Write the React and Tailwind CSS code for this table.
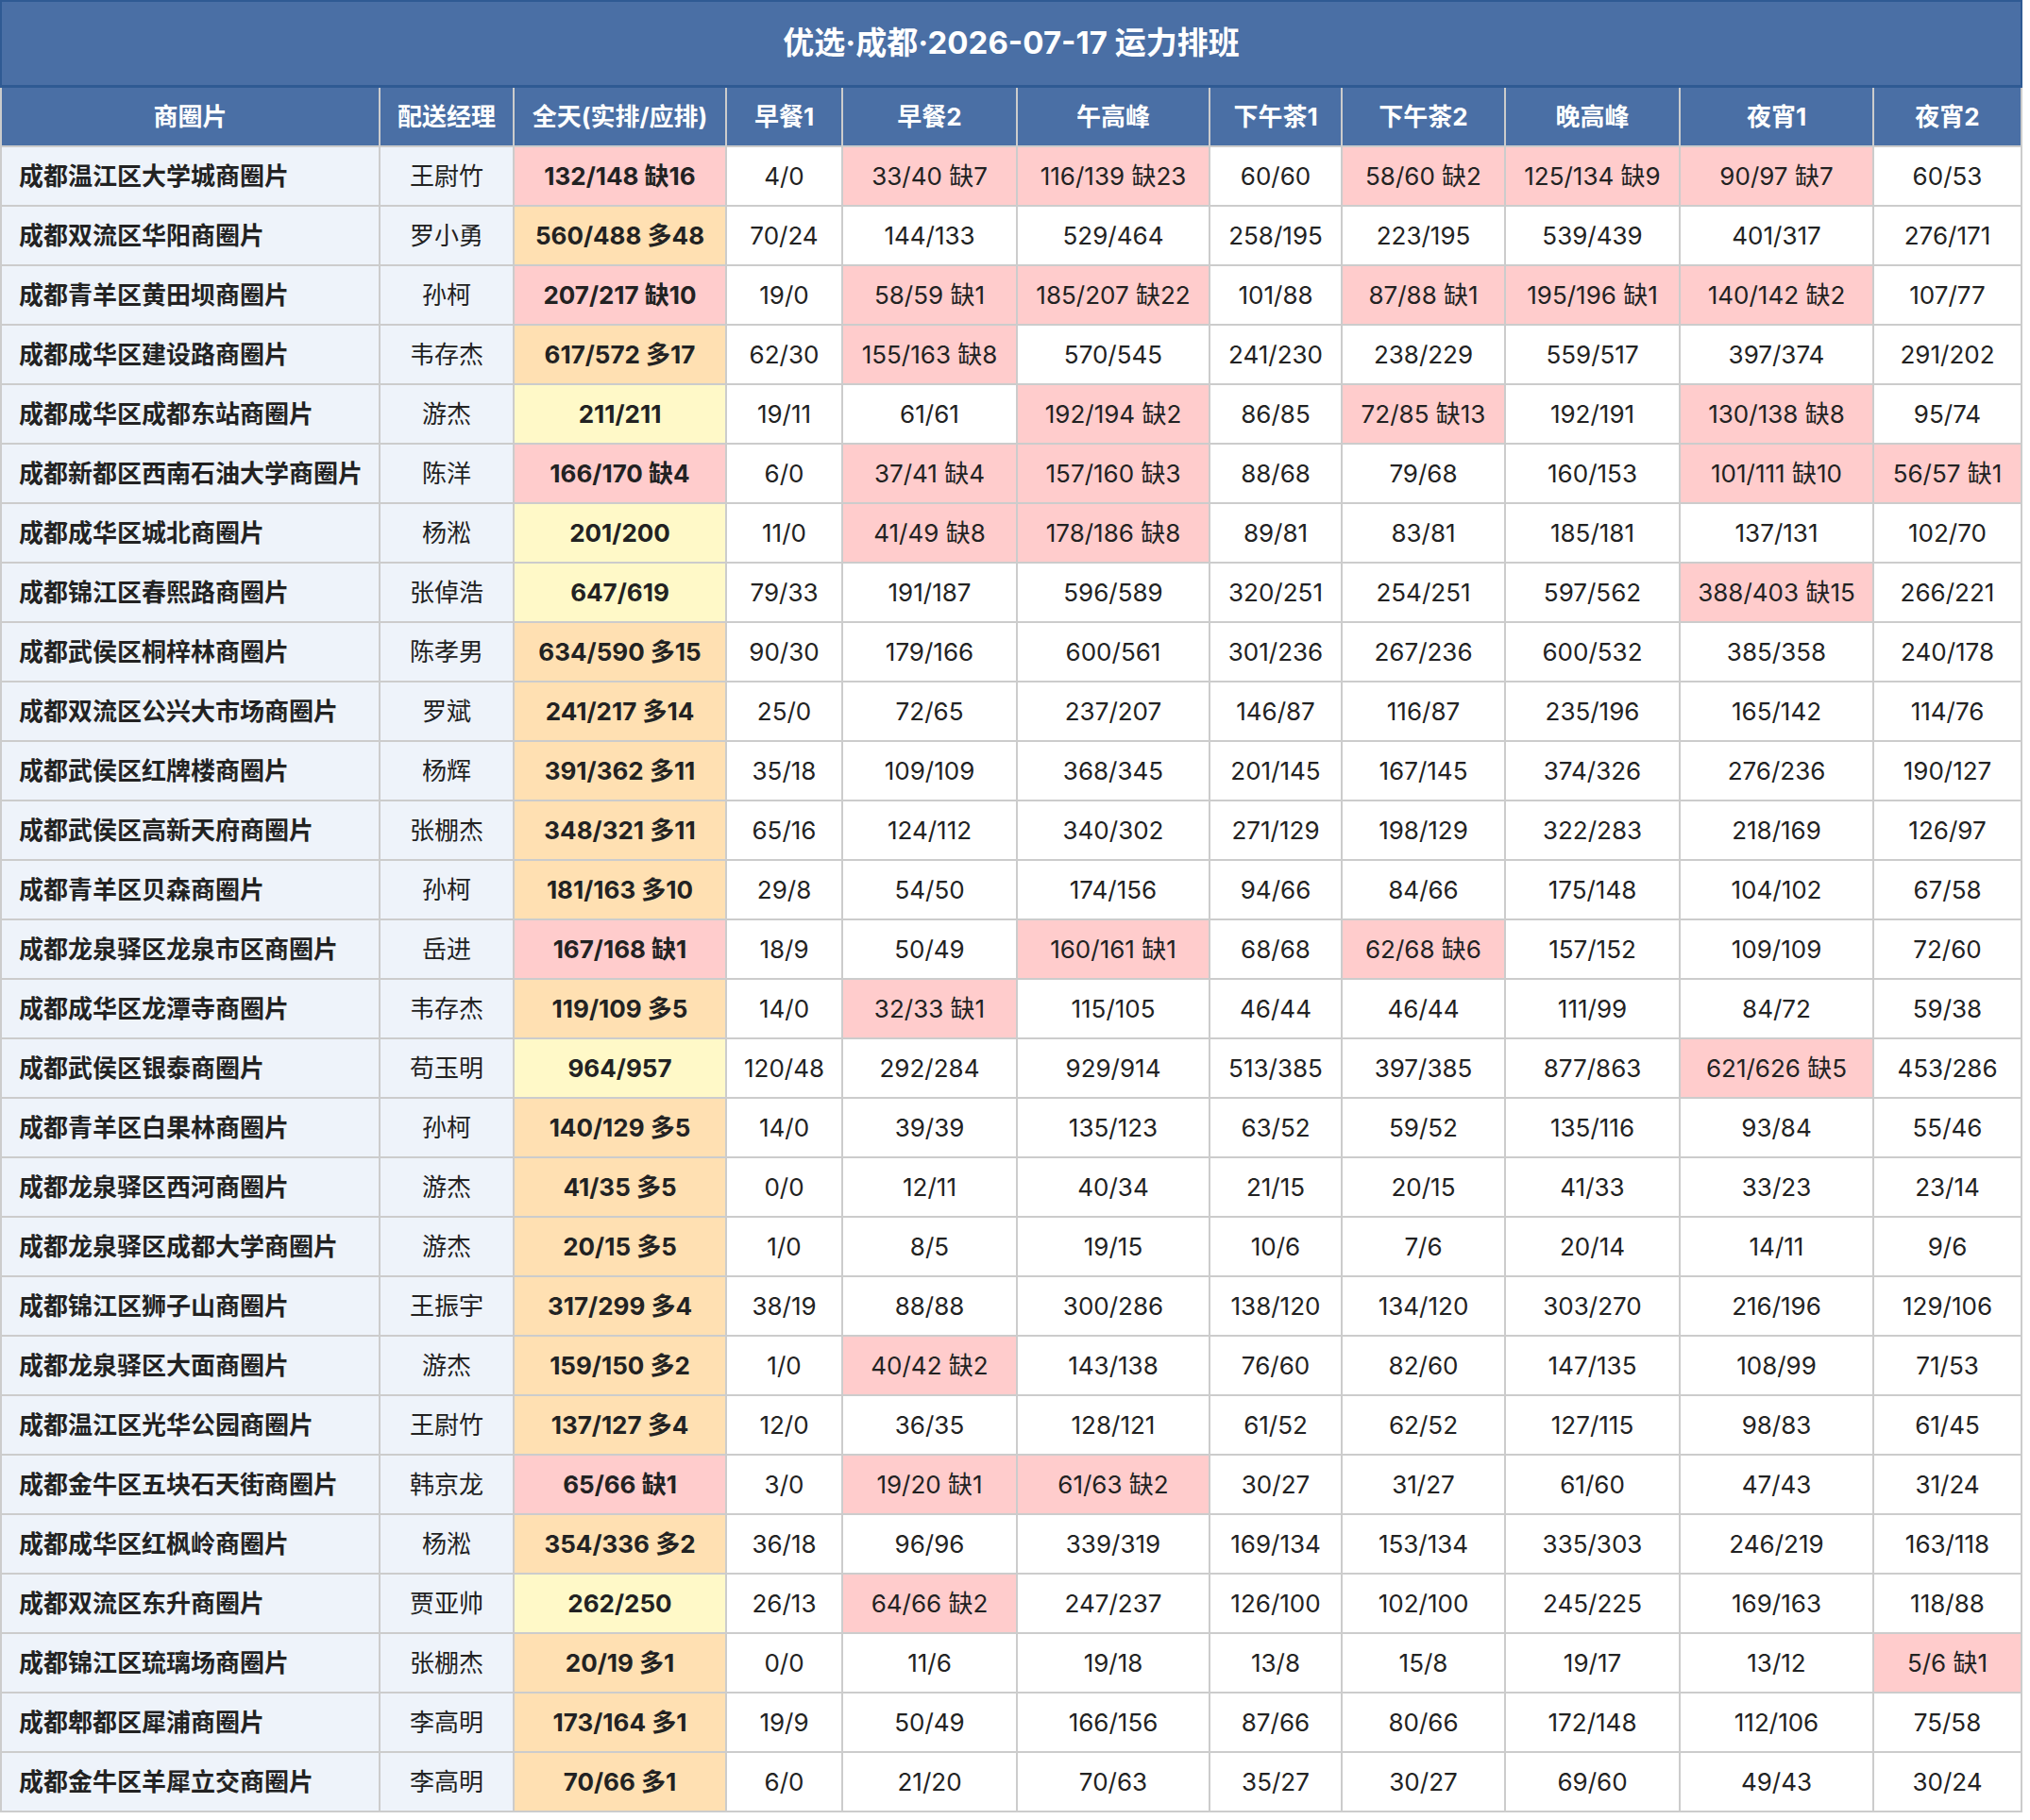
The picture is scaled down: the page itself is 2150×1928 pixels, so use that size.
import React from "react";

const columns = [
  "商圈片",
  "配送经理",
  "全天(实排/应排)",
  "早餐1",
  "早餐2",
  "午高峰",
  "下午茶1",
  "下午茶2",
  "晚高峰",
  "夜宵1",
  "夜宵2",
];

// 商圈片 | 配送经理 | 全天 | 早餐1 | 早餐2 | 午高峰 | 下午茶1 | 下午茶2 | 晚高峰 | 夜宵1 | 夜宵2
const rows = [
  ["成都温江区大学城商圈片", "王尉竹", "132/148 缺16", "4/0", "33/40 缺7", "116/139 缺23", "60/60", "58/60 缺2", "125/134 缺9", "90/97 缺7", "60/53"],
  ["成都双流区华阳商圈片", "罗小勇", "560/488 多48", "70/24", "144/133", "529/464", "258/195", "223/195", "539/439", "401/317", "276/171"],
  ["成都青羊区黄田坝商圈片", "孙柯", "207/217 缺10", "19/0", "58/59 缺1", "185/207 缺22", "101/88", "87/88 缺1", "195/196 缺1", "140/142 缺2", "107/77"],
  ["成都成华区建设路商圈片", "韦存杰", "617/572 多17", "62/30", "155/163 缺8", "570/545", "241/230", "238/229", "559/517", "397/374", "291/202"],
  ["成都成华区成都东站商圈片", "游杰", "211/211", "19/11", "61/61", "192/194 缺2", "86/85", "72/85 缺13", "192/191", "130/138 缺8", "95/74"],
  ["成都新都区西南石油大学商圈片", "陈洋", "166/170 缺4", "6/0", "37/41 缺4", "157/160 缺3", "88/68", "79/68", "160/153", "101/111 缺10", "56/57 缺1"],
  ["成都成华区城北商圈片", "杨淞", "201/200", "11/0", "41/49 缺8", "178/186 缺8", "89/81", "83/81", "185/181", "137/131", "102/70"],
  ["成都锦江区春熙路商圈片", "张倬浩", "647/619", "79/33", "191/187", "596/589", "320/251", "254/251", "597/562", "388/403 缺15", "266/221"],
  ["成都武侯区桐梓林商圈片", "陈孝男", "634/590 多15", "90/30", "179/166", "600/561", "301/236", "267/236", "600/532", "385/358", "240/178"],
  ["成都双流区公兴大市场商圈片", "罗斌", "241/217 多14", "25/0", "72/65", "237/207", "146/87", "116/87", "235/196", "165/142", "114/76"],
  ["成都武侯区红牌楼商圈片", "杨辉", "391/362 多11", "35/18", "109/109", "368/345", "201/145", "167/145", "374/326", "276/236", "190/127"],
  ["成都武侯区高新天府商圈片", "张棚杰", "348/321 多11", "65/16", "124/112", "340/302", "271/129", "198/129", "322/283", "218/169", "126/97"],
  ["成都青羊区贝森商圈片", "孙柯", "181/163 多10", "29/8", "54/50", "174/156", "94/66", "84/66", "175/148", "104/102", "67/58"],
  ["成都龙泉驿区龙泉市区商圈片", "岳进", "167/168 缺1", "18/9", "50/49", "160/161 缺1", "68/68", "62/68 缺6", "157/152", "109/109", "72/60"],
  ["成都成华区龙潭寺商圈片", "韦存杰", "119/109 多5", "14/0", "32/33 缺1", "115/105", "46/44", "46/44", "111/99", "84/72", "59/38"],
  ["成都武侯区银泰商圈片", "苟玉明", "964/957", "120/48", "292/284", "929/914", "513/385", "397/385", "877/863", "621/626 缺5", "453/286"],
  ["成都青羊区白果林商圈片", "孙柯", "140/129 多5", "14/0", "39/39", "135/123", "63/52", "59/52", "135/116", "93/84", "55/46"],
  ["成都龙泉驿区西河商圈片", "游杰", "41/35 多5", "0/0", "12/11", "40/34", "21/15", "20/15", "41/33", "33/23", "23/14"],
  ["成都龙泉驿区成都大学商圈片", "游杰", "20/15 多5", "1/0", "8/5", "19/15", "10/6", "7/6", "20/14", "14/11", "9/6"],
  ["成都锦江区狮子山商圈片", "王振宇", "317/299 多4", "38/19", "88/88", "300/286", "138/120", "134/120", "303/270", "216/196", "129/106"],
  ["成都龙泉驿区大面商圈片", "游杰", "159/150 多2", "1/0", "40/42 缺2", "143/138", "76/60", "82/60", "147/135", "108/99", "71/53"],
  ["成都温江区光华公园商圈片", "王尉竹", "137/127 多4", "12/0", "36/35", "128/121", "61/52", "62/52", "127/115", "98/83", "61/45"],
  ["成都金牛区五块石天街商圈片", "韩京龙", "65/66 缺1", "3/0", "19/20 缺1", "61/63 缺2", "30/27", "31/27", "61/60", "47/43", "31/24"],
  ["成都成华区红枫岭商圈片", "杨淞", "354/336 多2", "36/18", "96/96", "339/319", "169/134", "153/134", "335/303", "246/219", "163/118"],
  ["成都双流区东升商圈片", "贾亚帅", "262/250", "26/13", "64/66 缺2", "247/237", "126/100", "102/100", "245/225", "169/163", "118/88"],
  ["成都锦江区琉璃场商圈片", "张棚杰", "20/19 多1", "0/0", "11/6", "19/18", "13/8", "15/8", "19/17", "13/12", "5/6 缺1"],
  ["成都郫都区犀浦商圈片", "李高明", "173/164 多1", "19/9", "50/49", "166/156", "87/66", "80/66", "172/148", "112/106", "75/58"],
  ["成都金牛区羊犀立交商圈片", "李高明", "70/66 多1", "6/0", "21/20", "70/63", "35/27", "30/27", "69/60", "49/43", "30/24"],
];

const cellBase =
  "flex items-center border-r-2 border-b-2 border-[#cccccc] whitespace-nowrap";

// pick a background from the cell text
const cellColor = (value, col) => {
  if (col < 2) return "bg-[#eef3fa]";
  if (value.includes("缺")) return "bg-[#ffcccc]";
  if (col === 2) return value.includes("多") ? "bg-[#ffe0b2]" : "bg-[#fff9c8]";
  return "bg-white";
};

const App = () => {
  return (
    <div
      className="w-[2142px] text-[#222222]"
      style={{ fontFamily: '"Inter", "Noto Sans CJK SC", sans-serif' }}
    >
      {/* Title */}
      <div className="h-[93px] flex items-center justify-center bg-[#4a6fa5] border-2 border-b-[3px] border-[#2f5a93] text-white text-[33px] font-bold">
        优选·成都·2026-07-17 运力排班
      </div>

      <div className="grid grid-cols-[403px_142px_225px_123px_185px_204px_140px_173px_185px_205px_157px] auto-rows-[63px]">
        {/* Header */}
        {columns.map((name, i) => (
          <div
            key={name}
            className={`${cellBase} ${i === 0 ? "border-l-2" : ""} justify-center bg-[#4a6fa5] text-white text-[26px] font-bold`}
          >
            {name}
          </div>
        ))}

        {/* Rows */}
        {rows.map((row, r) =>
          row.map((value, c) => (
            <div
              key={`${r}-${c}`}
              className={`${cellBase} ${cellColor(value, c)} text-[26px] ${
                c === 0
                  ? "border-l-2 justify-start pl-[18px] font-bold"
                  : "justify-center"
              } ${c === 2 ? "font-bold" : ""}`}
            >
              {value}
            </div>
          ))
        )}
      </div>
    </div>
  );
};

export default App;
